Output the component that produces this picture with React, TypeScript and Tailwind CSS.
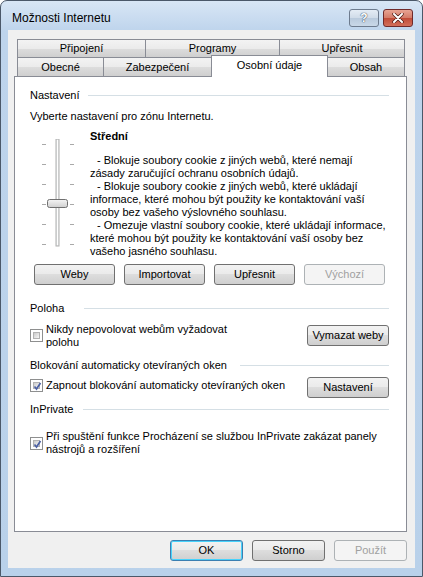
import type { ReactNode } from 'react'
import clsx from 'clsx'

function Button({
  children,
  disabled,
  focused,
  className,
}: {
  children: ReactNode
  disabled?: boolean
  focused?: boolean
  className?: string
}) {
  return (
    <button
      className={clsx(
        'h-[21px] shrink-0 rounded-[3px] border text-[11px] leading-none',
        disabled
          ? 'border-[#adb2b5] bg-[#f4f4f4] text-[#a0a0a0]'
          : 'bg-[linear-gradient(#f2f2f2,#ebebeb_45%,#dddddd_50%,#cfcfcf)] text-black',
        !disabled && (focused ? 'border-[#3c7fb1] shadow-[inset_0_0_0_1px_#48d2fb]' : 'border-[#707070]'),
        className,
      )}
    >
      {children}
    </button>
  )
}

function GroupHeader({ label, lineStart }: { label: string; lineStart: string }) {
  return (
    <div className="flex h-[13px] items-center">
      <span className={clsx('shrink-0 whitespace-nowrap', lineStart)}>{label}</span>
      <div className="h-px flex-1 bg-[#d5dfe5]" />
    </div>
  )
}

function Checkbox({ checked }: { checked?: boolean }) {
  return (
    <div className="relative h-[13px] w-[13px] shrink-0 border border-[#8e8f8f] bg-white p-[2px]">
      <div className="h-full w-full border border-[#b2b2b2] bg-[linear-gradient(135deg,#cbcbcb,#f6f6f6)]" />
      {checked && (
        <svg className="absolute left-[1px] top-[1px]" width="11" height="11" viewBox="0 0 11 11">
          <path d="M2.5 5.5 L4.5 8 L8.5 2" fill="none" stroke="#4c61a4" strokeWidth="1.7" />
        </svg>
      )}
    </div>
  )
}

function Tab({ label, className, active }: { label: string; className: string; active?: boolean }) {
  return (
    <div
      className={clsx(
        'flex items-center justify-center border border-[#898c95] text-[11px]',
        active
          ? 'relative z-10 -mb-px h-[22px] border-b-0 bg-white pb-[3px]'
          : 'h-[19px] bg-[linear-gradient(#f3f3f3,#ebebeb_50%,#dddddd_50%,#cfcfcf)]',
        className,
      )}
    >
      {label}
    </div>
  )
}

function PrivacySlider() {
  const ticks = [5, 25, 45, 65, 85, 105]
  return (
    <svg width="40" height="112" viewBox="0 0 40 112" className="shrink-0">
      {ticks.map((y) => (
        <g key={y} stroke="#a9a9a9">
          <line x1="2" y1={y + 0.5} x2="6" y2={y + 0.5} />
          <line x1="30" y1={y + 0.5} x2="34" y2={y + 0.5} />
        </g>
      ))}
      <rect x="16" y="0" width="3" height="107" fill="#e7eaea" stroke="#b0b0b0" strokeWidth="1" />
      <line x1="17.5" y1="1" x2="17.5" y2="106" stroke="#ffffff" />
      <rect x="7.5" y="60.5" width="20" height="8" rx="2" fill="url(#thumb)" stroke="#707070" />
      <defs>
        <linearGradient id="thumb" x1="0" y1="0" x2="0" y2="1">
          <stop offset="0" stopColor="#f4f4f4" />
          <stop offset="0.5" stopColor="#e2e2e2" />
          <stop offset="1" stopColor="#cfcfcf" />
        </linearGradient>
      </defs>
    </svg>
  )
}

export default function App() {
  return (
    <div className="flex h-[577px] w-[423px] flex-col overflow-hidden rounded-t-[7px] border border-[#4b5869] bg-[linear-gradient(#d8e6f5,#bed4ec_30px,#b9d1ea)] font-['Liberation_Sans',Arial,sans-serif] text-[11px] leading-[13px] text-black">
      {/* caption */}
      <div className="flex h-[29px] shrink-0 items-start">
        <span className="ml-[11px] mt-[10px] text-[12px] leading-[15px]">Možnosti Internetu</span>
        <div className="ml-auto mr-[9px] mt-[8px] flex gap-[4px]">
          <div className="flex h-[18px] w-[30px] items-center justify-center rounded-[3px] border border-[#6d7b8e] bg-[linear-gradient(#e4ecf5,#cfdbe8_50%,#b8c9dc_50%,#c9d8e8)] text-[12px] font-bold text-white [text-shadow:0_0_1px_#2a3a55,0_0_1px_#2a3a55]">
            ?
          </div>
          <div className="flex h-[18px] w-[30px] items-center justify-center rounded-[3px] border border-[#6f2a2a] bg-[linear-gradient(#e8a493,#d37a67_50%,#c04a36_50%,#d26f5a)]">
            <svg width="12" height="10" viewBox="0 0 12 10">
              <path d="M2 1 L10 9 M10 1 L2 9" stroke="#4a1a14" strokeWidth="3.4" strokeLinecap="round" />
              <path d="M2 1 L10 9 M10 1 L2 9" stroke="#ffffff" strokeWidth="2" strokeLinecap="round" />
            </svg>
          </div>
        </div>
      </div>

      {/* client area */}
      <div className="mx-[7px] mb-[8px] flex flex-1 flex-col bg-[#f0f0f0] pt-[9px]">
        <div className="ml-[9px] flex">
          <Tab label="Připojení" className="w-[129px]" />
          <Tab label="Programy" className="-ml-px w-[135px]" />
          <Tab label="Upřesnit" className="-ml-px w-[126px]" />
        </div>
        <div className="-mt-px ml-[9px] flex h-[19px] items-end">
          <Tab label="Obecné" className="w-[87px] border-b-0" />
          <Tab label="Zabezpečení" className="-ml-px w-[109px] border-b-0" />
          <Tab label="Osobní údaje" className="-ml-px w-[117px]" active />
          <Tab label="Obsah" className="-ml-px w-[78px] border-b-0" />
        </div>

        {/* tab page */}
        <div className="ml-[6px] mr-[8px] flex h-[456px] flex-col border border-[#898c95] bg-white pl-[15px] pr-[17px]">
          <div className="pt-[12px]">
            <GroupHeader label="Nastavení" lineStart="w-[58px]" />
          </div>
          <div className="mt-[8px]">Vyberte nastavení pro zónu Internetu.</div>

          <div className="mt-[7px] flex">
            <div className="ml-[10px] mt-[9px]">
              <PrivacySlider />
            </div>
            <div className="ml-[10px] whitespace-nowrap">
              <div className="font-bold">Střední</div>
              <div className="mt-[11px]">
                <div className="pl-[7px]">- Blokuje soubory cookie z jiných webů, které nemají</div>
                <div>zásady zaručující ochranu osobních údajů.</div>
                <div className="pl-[7px]">- Blokuje soubory cookie z jiných webů, které ukládají</div>
                <div>informace, které mohou být použity ke kontaktování vaší</div>
                <div>osoby bez vašeho výslovného souhlasu.</div>
                <div className="pl-[7px]">- Omezuje vlastní soubory cookie, které ukládají informace,</div>
                <div>které mohou být použity ke kontaktování vaší osoby bez</div>
                <div>vašeho jasného souhlasu.</div>
              </div>
            </div>
          </div>

          <div className="ml-[4px] mt-[6px] flex gap-[9px]">
            <Button className="w-[81px]">Weby</Button>
            <Button className="w-[81px]">Importovat</Button>
            <Button className="w-[81px]">Upřesnit</Button>
            <Button className="w-[81px]" disabled>
              Výchozí
            </Button>
          </div>

          <div className="mt-[17px]">
            <GroupHeader label="Poloha" lineStart="w-[54px]" />
          </div>
          <div className="mt-[7px] flex h-[27px] items-center">
            <Checkbox />
            <div className="ml-[3px] whitespace-nowrap">
              Nikdy nepovolovat webům vyžadovat
              <br />
              polohu
            </div>
            <Button className="ml-auto w-[82px]">Vymazat weby</Button>
          </div>

          <div className="mt-[10px]">
            <GroupHeader label="Blokování automaticky otevíraných oken" lineStart="w-[210px]" />
          </div>
          <div className="mt-[5px] flex items-start">
            <div className="flex h-[17px] items-center">
              <Checkbox checked />
              <div className="ml-[3px] whitespace-nowrap">Zapnout blokování automaticky otevíraných oken</div>
            </div>
            <Button className="ml-auto w-[82px]">Nastavení</Button>
          </div>

          <div className="mt-[5px]">
            <GroupHeader label="InPrivate" lineStart="w-[53px]" />
          </div>
          <div className="mt-[14px] flex items-center">
            <Checkbox checked />
            <div className="ml-[3px] whitespace-nowrap">
              Při spuštění funkce Procházení se službou InPrivate zakázat panely
              <br />
              nástrojů a rozšíření
            </div>
          </div>
        </div>

        <div className="mr-[8px] mt-[8px] flex justify-end gap-[9px]">
          <Button className="w-[73px]" focused>
            OK
          </Button>
          <Button className="w-[73px]">Storno</Button>
          <Button className="w-[73px]" disabled>
            Použít
          </Button>
        </div>
      </div>
    </div>
  )
}
